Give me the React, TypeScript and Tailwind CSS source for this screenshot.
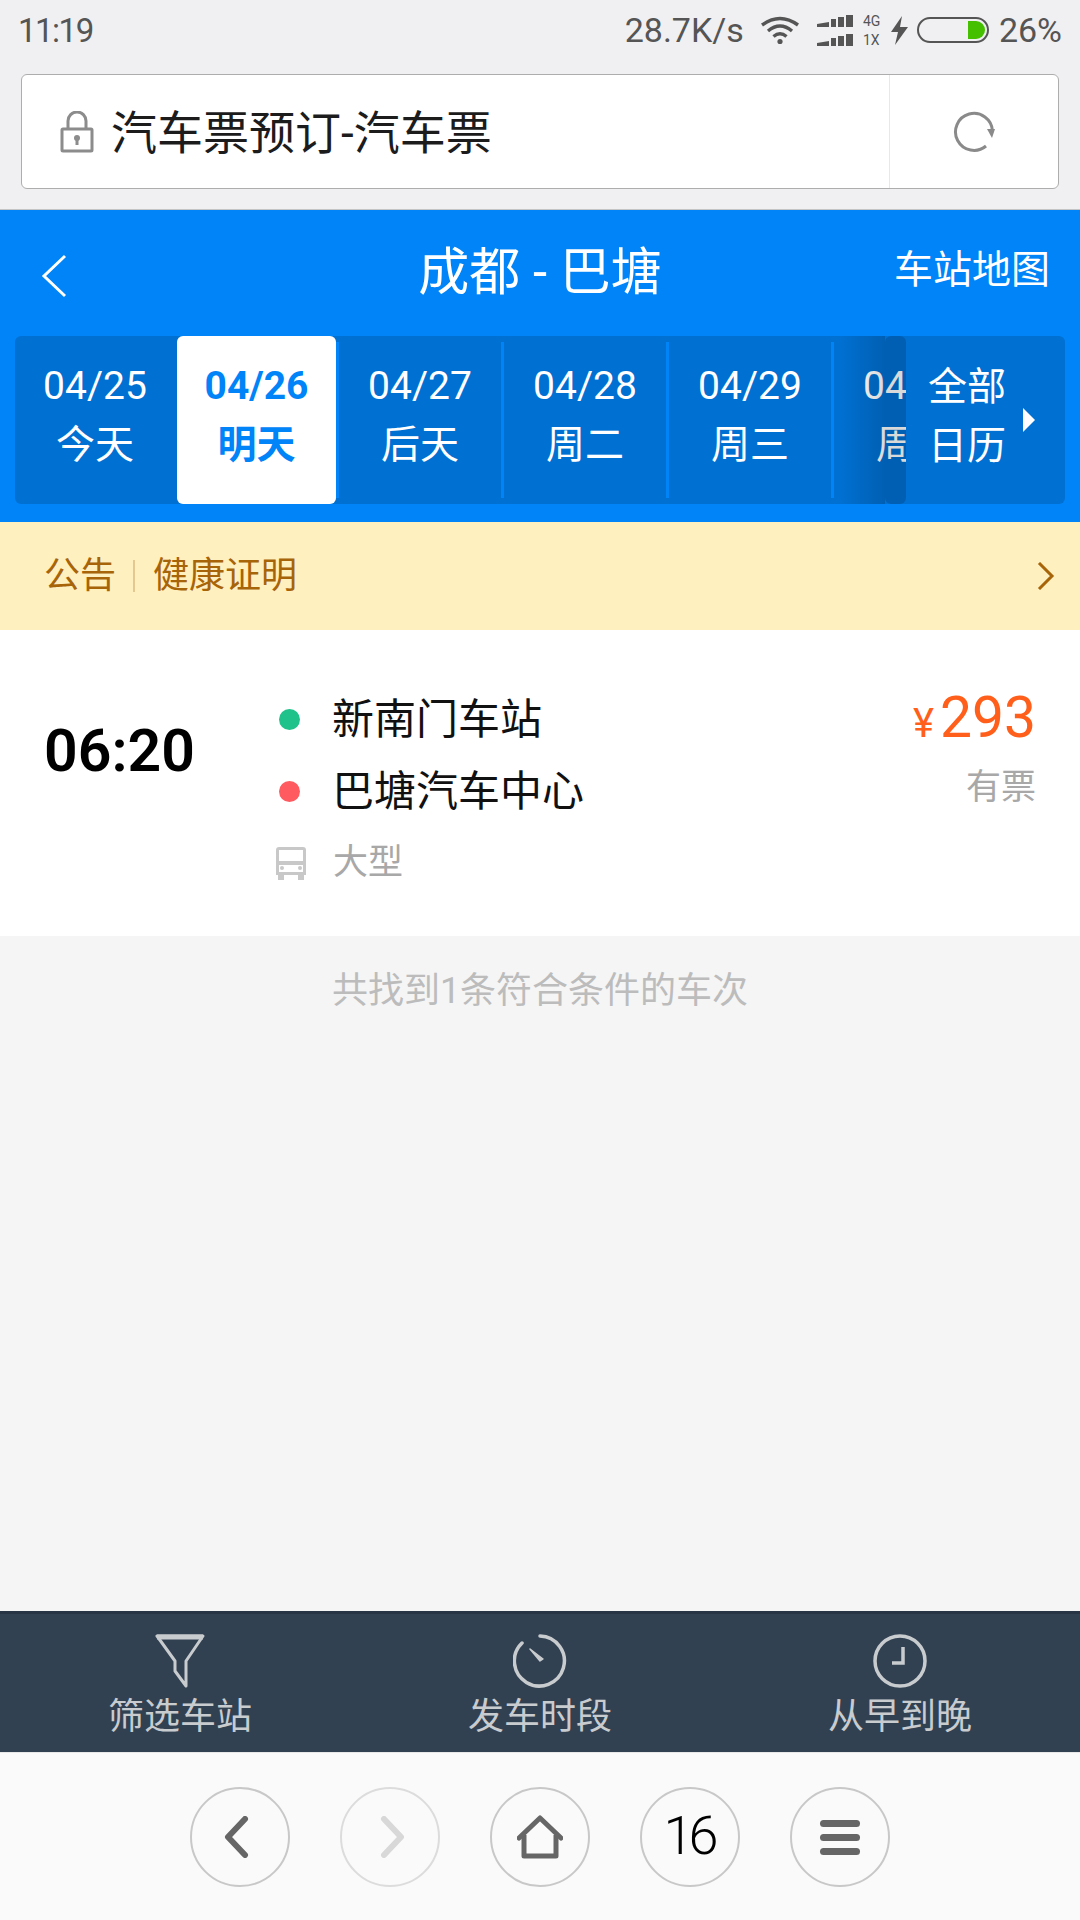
const FONT = 'font-["Roboto","Noto_Sans_CJK_SC",sans-serif]';

const DATES = [
  { date: '04/27', day: '后天' },
  { date: '04/28', day: '周二' },
  { date: '04/29', day: '周三' },
];

function WifiIcon() {
  return (
    <svg width="40" height="30" viewBox="0 0 40 30" fill="none" stroke="#555" strokeWidth="3.4">
      <path d="M2 10 Q20 -3 38 10" />
      <path d="M8 16 Q20 6 32 16" />
      <path d="M13.5 21.5 Q20 16 26.5 21.5" />
      <circle cx="20" cy="26.5" r="2.6" fill="#555" stroke="none" />
    </svg>
  );
}

function SignalBars() {
  return (
    <svg width="38" height="12" viewBox="0 0 38 12" fill="#555">
      <path d="M0 9 L12 7 V12 H0 Z" />
      <rect x="14" y="4" width="5" height="8" />
      <rect x="21" y="2" width="6" height="10" />
      <rect x="29" y="0" width="7" height="12" />
    </svg>
  );
}

function StatusBar() {
  return (
    <div className="h-[60px] px-[18px] flex items-center justify-between text-[#555555] text-[34px] leading-none">
      <span className="tracking-[-1.5px] text-[33px]">11:19</span>
      <div className="flex items-center">
        <span>28.7K/s</span>
        <div className="ml-[16px]"><WifiIcon /></div>
        <div className="ml-[17px] flex flex-col gap-[7px]">
          <SignalBars />
          <SignalBars />
        </div>
        <div className="ml-[8px] flex flex-col gap-[5px] text-[14px] leading-[14px] w-[22px]">
          <span>4G</span>
          <span>1X</span>
        </div>
        <svg className="ml-[6px]" width="18" height="29" viewBox="0 0 18 29" fill="#555">
          <path d="M11 0 L0 16 H7 L4 29 L17 11 H9 Z" />
        </svg>
        <div className="ml-[8px] w-[72px] h-[26px] rounded-full border-2 border-[#555555] flex justify-end p-[2px]">
          <div className="w-[17px] h-full bg-[#44c000] rounded-r-full" />
        </div>
        <span className="ml-[10px]">26%</span>
      </div>
    </div>
  );
}

function AddressBar() {
  return (
    <div className="h-[150px] px-[21px] pt-[14px] border-b border-[#c4c4c4]">
      <div className="w-[1038px] h-[115px] bg-white rounded-[6px] border border-[#adadad] flex items-center">
        <svg className="ml-[38px]" width="34" height="42" viewBox="0 0 34 42" fill="none" stroke="#8c8c8c" strokeWidth="3">
          <path d="M8 18 V10 A9 9 0 0 1 26 10 V18" />
          <rect x="2" y="18" width="30" height="22" rx="1" />
          <circle cx="17" cy="27" r="3" fill="#8c8c8c" stroke="none" />
          <rect x="15.5" y="28" width="3" height="6" fill="#8c8c8c" stroke="none" />
        </svg>
        <span className="ml-[17px] mt-[3px] text-[46px] leading-none text-[#1c1c1c]">汽车票预订-汽车票</span>
        <div className="ml-auto w-[169px] h-full border-l border-[#e8e8e8] flex items-center justify-center">
          <svg width="42" height="42" viewBox="0 0 42 42" fill="none" stroke="#8a8a8a" strokeWidth="3">
            <path d="M33 35 A18.5 18.5 0 1 1 39.5 20" />
            <path d="M34 18 H42 L39 27 Z" fill="#8a8a8a" stroke="none" />
          </svg>
        </div>
      </div>
    </div>
  );
}

function DateCell({ date, day, className }: { date: string; day: string; className: string }) {
  return (
    <div className={`shrink-0 h-full flex flex-col items-center pt-[25px] text-white ${className}`}>
      <span className="text-[39px] leading-[50px]">{date}</span>
      <span className="text-[39px] leading-[50px] mt-[9px]">{day}</span>
    </div>
  );
}

function Header() {
  return (
    <div className="h-[312px] bg-[#0084f8] pt-[1px]">
      <div className="h-[125px] relative flex items-center justify-center">
        <svg className="absolute left-[41px] top-[43px]" width="26" height="44" viewBox="0 0 26 44" fill="none" stroke="white" strokeWidth="3">
          <path d="M24 2 L3 22 L24 42" />
        </svg>
        <span className="text-[51px] leading-none text-white -mt-[3px]">成都 - 巴塘</span>
        <span className="absolute right-[30px] top-[36px] text-[39px] leading-[46px] text-white">车站地图</span>
      </div>
      {/* Date strip, then the fixed calendar button */}
      <div className="mx-[15px] h-[168px] bg-[#0070d2] rounded-[6px] overflow-hidden flex">
        <div className="relative w-[891px] h-full overflow-hidden flex">
          <DateCell date="04/25" day="今天" className="w-[160px]" />
          <div className="shrink-0 ml-[2px] w-[159px] h-full bg-white rounded-[6px] flex flex-col items-center pt-[25px] text-[#0084f8] font-bold">
            <span className="text-[39px] leading-[50px]">04/26</span>
            <span className="text-[39px] leading-[50px] mt-[9px]">明天</span>
          </div>
          <div className="shrink-0 w-[3px] mt-[6px] h-[156px] bg-[#0084f8]" />
          {DATES.map((d) => (
            <div key={d.date} className="flex shrink-0 h-full">
              <DateCell date={d.date} day={d.day} className="w-[162px]" />
              <div className="shrink-0 w-[3px] mt-[6px] h-[156px] bg-[#0084f8]" />
            </div>
          ))}
          <DateCell date="04/30" day="周四" className="w-[162px]" />
          <div className="absolute left-[825px] top-0 w-[45px] h-full bg-gradient-to-r from-black/0 to-black/15" />
          <div className="absolute left-[870px] top-0 w-[21px] h-full bg-black/15 rounded-[6px]" />
        </div>
        <div className="flex-1 flex items-center">
          <div className="ml-[22px] flex flex-col items-center text-white text-[39px] leading-[50px] gap-[9px] -mt-[8px]">
            <span>全部</span>
            <span>日历</span>
          </div>
          <svg className="ml-[17px]" width="12" height="24" viewBox="0 0 12 24" fill="white">
            <path d="M0 0 L12 12 L0 24 Z" />
          </svg>
        </div>
      </div>
    </div>
  );
}

function Notice() {
  return (
    <div className="h-[108px] bg-[#fff0c0] pl-[44px] pr-[25px] flex items-center text-[#a86408] text-[36px] leading-none">
      <span>公告</span>
      <div className="ml-[17px] mr-[18px] w-[2px] h-[32px] bg-[#e5c88f]" />
      <span>健康证明</span>
      <svg className="ml-auto" width="18" height="28" viewBox="0 0 18 28" fill="none" stroke="#a86408" strokeWidth="3">
        <path d="M2 1 L15 14 L2 27" />
      </svg>
    </div>
  );
}

function BusIcon() {
  return (
    <svg width="32" height="33" viewBox="0 0 32 33" fill="#c8c8c8">
      <path fillRule="evenodd" d="M4 0 H28 Q31 0 31 3 V28 H1 V3 Q1 0 4 0 Z M4 3 V14 H28 V3 Z M4 18 V25 H28 V18 Z" />
      <rect x="3" y="27" width="6" height="6" />
      <rect x="23" y="27" width="6" height="6" />
      <circle cx="7" cy="21" r="2" />
      <circle cx="25" cy="21" r="2" />
    </svg>
  );
}

function TicketCard() {
  return (
    <div className="h-[306px] bg-white flex">
      <div className="w-[279px] pl-[44px] pt-[91px] text-[59px] leading-none font-semibold text-black">06:20</div>
      <div className="flex-1 pt-[53px]">
        <div className="h-[72px] flex items-center text-[42px] text-[#111111]">
          <div className="w-[21px] h-[21px] rounded-full bg-[#1fc28a]" />
          <span className="ml-[32px]">新南门车站</span>
        </div>
        <div className="h-[72px] flex items-center text-[42px] text-[#111111]">
          <div className="w-[21px] h-[21px] rounded-full bg-[#ff5a5f]" />
          <span className="ml-[32px]">巴塘汽车中心</span>
        </div>
        <div className="h-[72px] flex items-center text-[35px] text-[#a8a8a8] -ml-[4px]">
          <BusIcon />
          <span className="ml-[26px]">大型</span>
        </div>
      </div>
      <div className="pr-[44px] pt-[62px] flex flex-col items-end">
        <div className="flex items-baseline text-[#ff5f1a] leading-[52px]">
          <span className="text-[40px]">¥</span>
          <span className="text-[57px] ml-[6px]">293</span>
        </div>
        <span className="mt-[18px] text-[35px] leading-[40px] text-[#a8a8a8]">有票</span>
      </div>
    </div>
  );
}

function FilterBar() {
  return (
    <div className="h-[141px] bg-[#324152] border-t-[3px] border-[#273545] grid grid-cols-3 text-[#c9cccf]">
      <div className="flex flex-col items-center pt-[20px]">
        <svg width="50" height="54" viewBox="0 0 50 54" fill="none" stroke="#c9cccf" strokeWidth="3">
          <path d="M2 2 H48 L31 27 V52 L20 37 V27 Z" strokeLinejoin="round" />
          <path d="M2 3 H48" strokeWidth="5" />
        </svg>
        <span className="text-[36px] leading-[40px] mt-[9px]">筛选车站</span>
      </div>
      <div className="flex flex-col items-center pt-[20px]">
        <svg width="54" height="54" viewBox="0 0 54 54" fill="none" stroke="#c9cccf" strokeWidth="3.5">
          <path d="M27 2 A25 25 0 1 1 9 9 " strokeLinecap="round" />
          <path d="M17 15 L27 27 L30 25 Z" fill="#c9cccf" strokeWidth="1.5" strokeLinejoin="round" />
        </svg>
        <span className="text-[36px] leading-[40px] mt-[9px]">发车时段</span>
      </div>
      <div className="flex flex-col items-center pt-[20px]">
        <svg width="54" height="54" viewBox="0 0 54 54" fill="none" stroke="#c9cccf" strokeWidth="3.5">
          <circle cx="27" cy="27" r="25" />
          <path d="M30 13 V29 H19" />
        </svg>
        <span className="text-[36px] leading-[40px] mt-[9px]">从早到晚</span>
      </div>
    </div>
  );
}

function NavButton({ children, faded }: { children: React.ReactNode; faded?: boolean }) {
  return (
    <div className={`w-[100px] h-[100px] rounded-full border-2 flex items-center justify-center ${faded ? 'border-[#dcdcdc]' : 'border-[#c8c8c8]'}`}>
      {children}
    </div>
  );
}

function BrowserNav() {
  return (
    <div className="h-[168px] bg-[#fafafa] border-t border-[#e8e8e8] pt-[34px] flex justify-center gap-[50px]">
      <NavButton>
        <svg className="-ml-[8px]" width="26" height="42" viewBox="0 0 26 42" fill="none" stroke="#666" strokeWidth="6" strokeLinecap="round" strokeLinejoin="round">
          <path d="M22 3 L5 21 L22 39" />
        </svg>
      </NavButton>
      <NavButton faded>
        <svg className="ml-[6px]" width="26" height="42" viewBox="0 0 26 42" fill="none" stroke="#d8d8d8" strokeWidth="6" strokeLinecap="round" strokeLinejoin="round">
          <path d="M4 3 L21 21 L4 39" />
        </svg>
      </NavButton>
      <NavButton>
        <svg width="46" height="44" viewBox="0 0 46 44" fill="none" stroke="#666" strokeWidth="5" strokeLinejoin="round">
          <path d="M2 23 L23 3 L44 23" strokeLinecap="round" />
          <path d="M7 20 V41 H39 V20" />
        </svg>
      </NavButton>
      <NavButton>
        <span className="text-[54px] leading-none text-black font-light tracking-[-5px] -ml-[3px] -mt-[2px]">16</span>
      </NavButton>
      <NavButton>
        <div className="flex flex-col gap-[7px]">
          <div className="w-[40px] h-[7px] rounded-full bg-[#666666]" />
          <div className="w-[40px] h-[7px] rounded-full bg-[#666666]" />
          <div className="w-[40px] h-[7px] rounded-full bg-[#666666]" />
        </div>
      </NavButton>
    </div>
  );
}

export default function App() {
  return (
    <div className={`w-[1080px] h-[1920px] bg-[#f5f5f5] flex flex-col overflow-hidden ${FONT}`}>
      <div className="bg-[#f0f0f2]">
        <StatusBar />
        <AddressBar />
      </div>
      <Header />
      <Notice />
      <TicketCard />
      <div className="flex-1 pt-[34px] text-center text-[36px] leading-[42px] text-[#bcbcbc]">共找到1条符合条件的车次</div>
      <FilterBar />
      <BrowserNav />
    </div>
  );
}
